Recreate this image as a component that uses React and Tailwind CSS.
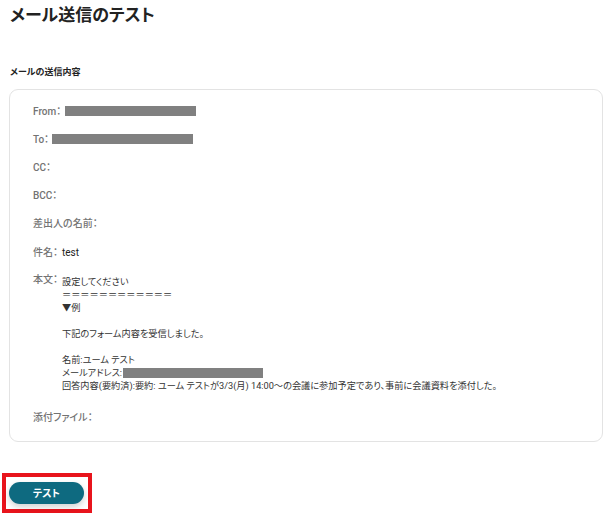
const font = { fontFamily: 'Roboto, "Noto Sans CJK JP", sans-serif' }

function Field({ label, children }) {
  return (
    <div className="flex items-center h-[14px]">
      <span className="text-[10px] font-medium text-[#737373] whitespace-nowrap">{label}</span>
      {children}
    </div>
  )
}

function Bar({ className }) {
  return <span className={`inline-block h-[10px] bg-[#808080] ${className}`} />
}

export default function App() {
  const body = [
    '設定してください',
    '＝＝＝＝＝＝＝＝＝＝＝＝',
    '▼例',
    '',
    '下記のフォーム内容を受信しました。',
    '',
    '名前:ユーム テスト',
  ]

  return (
    <div className="w-[610px] h-[523px] bg-white px-[9px] pt-[4px] [font-feature-settings:'palt']" style={font}>
      <h1 className="text-[17px] font-bold text-[#222] leading-[22px] pl-[1px]">メール送信のテスト</h1>

      <h2 className="mt-[40px] text-[9px] font-bold text-[#222] leading-[12px] pl-[1px]">メールの送信内容</h2>

      <div className="mt-[11px] w-[594px] rounded-[9px] border border-[#e3e3e3] pl-[23px] pt-[14px] pb-[17px] flex flex-col gap-[14px]">
        <Field label="From：">
          <Bar className="ml-[4px] w-[131px]" />
        </Field>
        <Field label="To：">
          <Bar className="ml-[3px] w-[141px]" />
        </Field>
        <Field label="CC：" />
        <Field label="BCC：" />
        <Field label="差出人の名前：" />
        <div className="flex items-center h-[14px] mt-[1px]">
          <span className="text-[10px] font-medium text-[#737373] w-[29px]">件名：</span>
          <span className="text-[10px] text-[#222]">test</span>
        </div>
        <div className="flex">
          <span className="text-[10px] font-medium text-[#737373] w-[29px] leading-[14px] shrink-0">本文：</span>
          <div className="pt-[2px] text-[9.2px] text-[#333] leading-[13px] whitespace-pre">
            {body.map((line, i) => (
              <div key={i} className="h-[13px]">{line}</div>
            ))}
            <div className="h-[13px] flex items-center">
              メールアドレス:<Bar className="w-[140px] ml-[1px]" />
            </div>
            <div className="h-[13px]">
              回答内容(要約済):要約: ユーム テストが3/3(月) 14:00〜の会議に参加予定であり、事前に会議資料を添付した。
            </div>
          </div>
        </div>
        <div className="mt-[4px]">
          <Field label="添付ファイル：" />
        </div>
      </div>

      <div className="mt-[31px] -ml-[7px] w-[90px] h-[40px] border-[4px] border-[#e8141c] flex items-center pl-[3px]">
        <button
          type="button"
          className="w-[75px] h-[22px] rounded-full bg-[#0e6a80] text-white text-[10px] font-bold shadow-[0_3px_6px_rgba(0,0,0,0.18)]"
        >
          テスト
        </button>
      </div>
    </div>
  )
}
